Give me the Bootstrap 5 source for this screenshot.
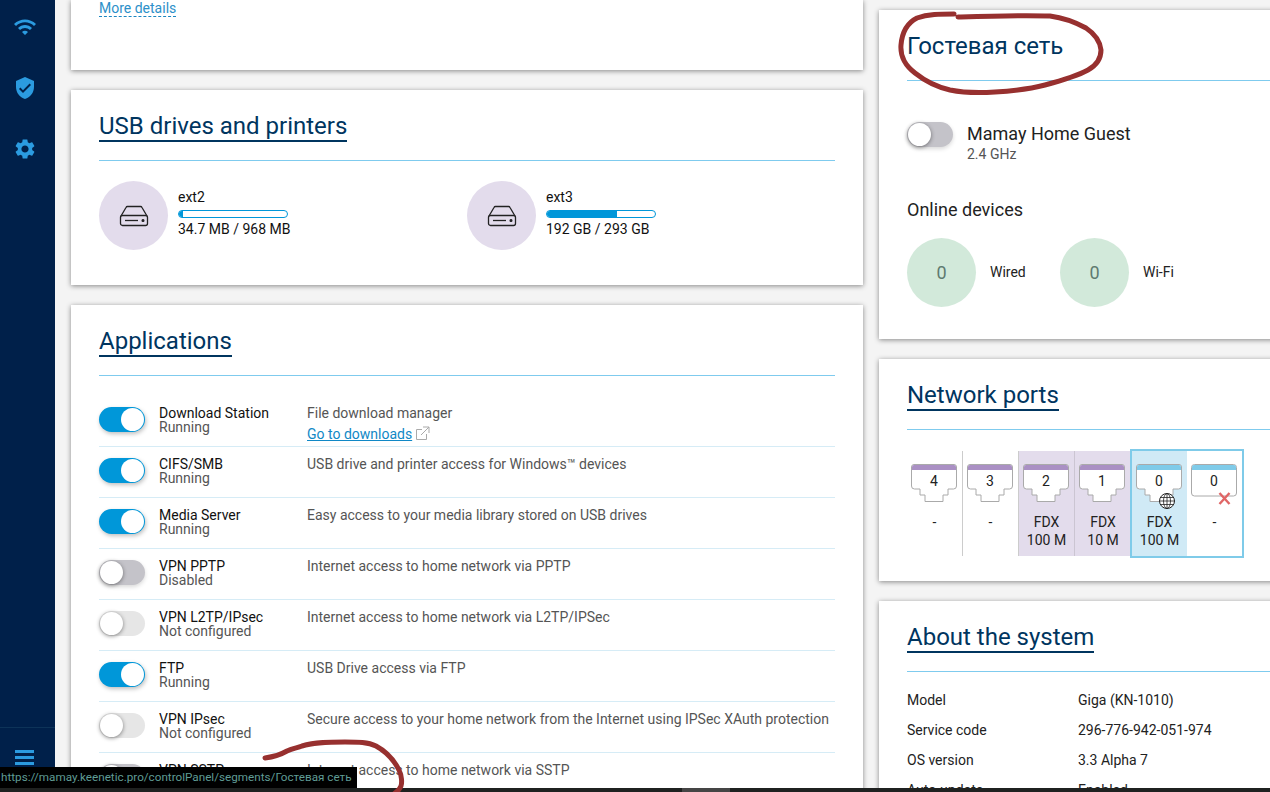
<!DOCTYPE html>
<html lang="en">
<head>
<meta charset="utf-8">
<title>Keenetic</title>
<link rel="stylesheet" href="https://cdn.jsdelivr.net/npm/bootstrap@5.3.0/dist/css/bootstrap.min.css">
<style>
html,body{height:792px;overflow:hidden}
body{background:#f4f4f4;font-family:Roboto,"Noto Sans",sans-serif;font-size:14px;color:#111;position:relative}
.side{width:55px;height:792px;background:#00204a;flex:none}
.side-top{padding-top:15px;gap:37px;padding-right:5px}
.side-ic{width:24px;height:24px;fill:#2b9be0;display:block}
.side-foot{border-top:1px solid #0d3358;height:65px;padding-top:22px;padding-right:6px}
.burger{width:19px;height:15px;background:repeating-linear-gradient(#2b9be0 0 3px,transparent 3px 6px)}
.wrap{padding-left:16px;gap:16px}
.lcol{width:792px;flex:none;gap:20px}
.rcol{width:420px;flex:none;gap:20px;padding-top:10px}
.pane{background:#fff;box-shadow:0 1px 5px rgba(0,0,0,.45);padding:0 28px;border-radius:0}
.pane-first{height:70px}
.more{color:#2c90c9;text-decoration:none;border-bottom:1px dashed #1b86c2;line-height:16px;display:block;width:fit-content;padding-top:0}
.hdr{padding-top:22px;height:71px;border-bottom:1px solid #7fcbee}
.hdr-t{display:inline-block;font-size:24px;line-height:28px;font-weight:400;color:#00355f;margin:0;padding-bottom:0;border-bottom:2px solid #00355f}
.hdr-plain{border-bottom-color:transparent}
.pane-usb{height:195px}
.disc{width:69px;height:69px;border-radius:50%;background:#e3dcec;flex:none}
.disc-green{background:#d2e9da;color:#5f7a70;font-size:18px}
.drive{width:368px;padding-top:20px}
.info{padding-left:10px;padding-top:8px;line-height:16px}
.bar-o{width:110px;height:8px;border:1px solid #0097d9;border-radius:4px;margin:5px 0 3px;overflow:hidden;background:#fff}
.bar-i{height:100%;background:#0097d9}
.pane-app{height:560px}
.applist{padding-top:20px}
.approw{height:51px;border-bottom:1px solid #d6ecf6;padding-top:10px;line-height:14px}
.sw{width:46px;height:25px;border-radius:13px;position:relative;flex:none;margin-top:1px;background:#c4c3c9}
.sw::after{content:"";position:absolute;top:1px;left:1px;width:23px;height:23px;border-radius:50%;background:#fff;box-shadow:0 1px 4px rgba(0,0,0,.45)}
.sw-on{background:#0097d9;box-shadow:1px 2px 4px rgba(0,0,0,.25)}
.sw-on::after{left:22px;box-shadow:none}
.sw-na{background:#e6e6e6}
.sw-off{box-shadow:0 2px 4px rgba(0,0,0,.15)}
.nm{width:148px;margin-left:14px;flex:none}
.stat{color:#555}
.dsc{color:#555;white-space:nowrap}
.golink{color:#1088c6;text-decoration:underline;display:inline-block;margin-top:7px}
.ext{width:15px;height:15px;vertical-align:-2px;margin-left:3px}
.pane-guest{height:329px}
.gname{font-size:18px;line-height:22px;margin:2px 0 0 14px;color:#222}
.gsub{font-size:14px;line-height:18px;color:#555;margin-top:0}
.grow{padding-top:40px}
.osub{font-size:18px;line-height:22px;margin-top:36px;margin-bottom:17px;color:#222}
.dev{width:153px}
.dev-l{margin-left:14px;color:#222}
.pane-ports{height:222px}
.ports{margin-top:21px;height:105px;line-height:18px}
.pcol{width:56px;text-align:center;flex:none;padding-top:13px;color:#222}
.pcol-b{border-right:1px solid #ccc}
.pcol-p{background:#e3dcec;border-right:1px solid #cbc5d2}
.pcol-last{border-right:0}
.pcol-w{width:55px;background:#d0eaf6}
.pcol-x{width:55px}
.pbox{border:2px solid #7fcbe9;margin:-2px 0 -2px -1px;height:109px}
.pic{position:relative;width:46px;height:38px;margin:0 0 11px 4px;text-align:center;display:block}
.pic svg{position:absolute;left:0;top:0;overflow:visible}
.pnum{position:absolute;left:0;right:0;top:8px;line-height:18px;color:#222}
.pane-about{height:300px}
.kv{padding-top:19px}
.kvr{height:30px;line-height:18px;color:#222}
.kvk{width:171px}
.statusbar{position:absolute;left:0;top:767px;width:357px;height:21px;background:#000;color:#5f9c95;font-size:11.7px;line-height:21px;padding-left:1px;white-space:nowrap;overflow:hidden;font-family:Roboto,sans-serif;z-index:5}
.strip{position:absolute;left:0;right:0;top:788px;height:4px;background:#1f2120;z-index:5}
.strip i{position:absolute;left:682px;width:48px;top:0;bottom:0;background:#454545}
.scrib{position:absolute;left:0;top:0;pointer-events:none;z-index:4}
.scrib path{fill:none;stroke:#97302f;stroke-width:5;stroke-linecap:round;stroke-linejoin:round}
.scrib-top{z-index:6}
</style>
</head>
<body>
<svg width="0" height="0" class="position-absolute">
  <defs>
    <path id="jack" d="M.5 3Q.5.500 3 .500h40q2.500 0 2.500 2.500v19q0 3-3 3H37v6h-5v6.500H14V31H9v-6H3.500q-3 0-3-3z" fill="#fff" stroke="#aaa"/>
    <g id="drv" fill="none" stroke="#222" stroke-width="1.3"><path d="M2 11 7 2.500c.3-.6.7-1 1.400-1h13.200c.7 0 1.100.4 1.400 1l5 8.500"/><rect x="1.500" y="10.500" width="27" height="10" rx="2"/><path d="M6 15.500h13"/><circle cx="24" cy="15.500" r=".9" fill="#222"/></g>
  </defs>
</svg>
<div class="d-flex">
  <nav class="side d-flex flex-column justify-content-between align-items-center">
    <div class="side-top d-flex flex-column align-items-center">
      <svg class="side-ic" viewBox="0 0 24 24"><path d="M1 9l2 2c4.970-4.970 13.030-4.970 18 0l2-2C16.930 2.930 7.080 2.930 1 9zm8 8l3 3 3-3c-1.650-1.660-4.340-1.660-6 0zm-4-4l2 2c2.760-2.760 7.240-2.760 10 0l2-2C15.140 9.140 8.870 9.140 5 13z"/></svg>
      <svg class="side-ic" viewBox="0 0 24 24"><path d="M12 1L3 5v6c0 5.550 3.840 10.740 9 12 5.160-1.260 9-6.450 9-12V5l-9-4zm-2 16l-4-4 1.410-1.410L10 14.170l6.590-6.590L18 9l-8 8z"/></svg>
      <svg class="side-ic" viewBox="0 0 24 24"><path d="M19.14 12.94c.04-.3.06-.61.06-.94 0-.32-.02-.64-.07-.94l2.03-1.58c.18-.14.23-.41.12-.61l-1.92-3.32c-.12-.22-.37-.29-.59-.22l-2.39.96c-.5-.38-1.03-.7-1.62-.94l-.36-2.54c-.04-.24-.24-.41-.48-.41h-3.84c-.24 0-.43.17-.47.41l-.36 2.54c-.59.24-1.13.57-1.62.94l-2.39-.96c-.22-.08-.47 0-.59.22L2.74 8.87c-.12.21-.08.47.12.61l2.03 1.58c-.05.3-.09.63-.09.94s.02.64.07.94l-2.03 1.58c-.18.14-.23.41-.12.61l1.92 3.32c.12.22.37.29.59.22l2.39-.96c.5.38 1.03.7 1.62.94l.36 2.54c.05.24.24.41.48.41h3.84c.24 0 .44-.17.47-.41l.36-2.54c.59-.24 1.13-.56 1.62-.94l2.39.96c.22.08.47 0 .59-.22l1.92-3.32c.12-.22.07-.47-.12-.61l-2.01-1.58zM12 15.6c-1.98 0-3.6-1.62-3.6-3.6s1.62-3.6 3.6-3.6 3.6 1.62 3.6 3.6-1.62 3.6-3.6 3.6z"/></svg>
    </div>
    <div class="side-foot w-100 d-flex justify-content-center"><div class="burger"></div></div>
  </nav>

  <main class="wrap d-flex">
    <div class="lcol d-flex flex-column">
      <section class="pane pane-first"><a class="more" href="#">More details</a></section>

      <section class="pane pane-usb">
        <div class="hdr"><h2 class="hdr-t">USB drives and printers</h2></div>
        <div class="d-flex">
          <div class="drive d-flex">
            <div class="disc d-flex align-items-center justify-content-center"><svg width="30" height="22" viewBox="0 0 30 22"><use href="#drv"/></svg></div>
            <div class="info"><div>ext2</div><div class="bar-o"><div class="bar-i" style="width:4%"></div></div><div>34.7 MB / 968 MB</div></div>
          </div>
          <div class="drive d-flex">
            <div class="disc d-flex align-items-center justify-content-center"><svg width="30" height="22" viewBox="0 0 30 22"><use href="#drv"/></svg></div>
            <div class="info"><div>ext3</div><div class="bar-o"><div class="bar-i" style="width:65%"></div></div><div>192 GB / 293 GB</div></div>
          </div>
        </div>
      </section>

      <section class="pane pane-app">
        <div class="hdr"><h2 class="hdr-t">Applications</h2></div>
        <div class="applist">
          <div class="approw d-flex"><span class="sw sw-on"></span><div class="nm"><div>Download Station</div><div class="stat">Running</div></div><div class="dsc">File download manager<br><a class="golink" href="#">Go to downloads</a><svg class="ext" viewBox="0 0 15 15" fill="none" stroke="#aaa"><path d="M11.500 8v5.500h-10v-10H7M8 1h6v6M14 1 6 9"/></svg></div></div>
          <div class="approw d-flex"><span class="sw sw-on"></span><div class="nm"><div>CIFS/SMB</div><div class="stat">Running</div></div><div class="dsc">USB drive and printer access for Windows™ devices</div></div>
          <div class="approw d-flex"><span class="sw sw-on"></span><div class="nm"><div>Media Server</div><div class="stat">Running</div></div><div class="dsc">Easy access to your media library stored on USB drives</div></div>
          <div class="approw d-flex"><span class="sw sw-off"></span><div class="nm"><div>VPN PPTP</div><div class="stat">Disabled</div></div><div class="dsc">Internet access to home network via PPTP</div></div>
          <div class="approw d-flex"><span class="sw sw-na"></span><div class="nm"><div>VPN L2TP/IPsec</div><div class="stat">Not configured</div></div><div class="dsc">Internet access to home network via L2TP/IPSec</div></div>
          <div class="approw d-flex"><span class="sw sw-on"></span><div class="nm"><div>FTP</div><div class="stat">Running</div></div><div class="dsc">USB Drive access via FTP</div></div>
          <div class="approw d-flex"><span class="sw sw-na"></span><div class="nm"><div>VPN IPsec</div><div class="stat">Not configured</div></div><div class="dsc">Secure access to your home network from the Internet using IPSec XAuth protection</div></div>
          <div class="approw d-flex"><span class="sw sw-off"></span><div class="nm"><div>VPN SSTP</div><div class="stat">Disabled</div></div><div class="dsc">Internet access to home network via SSTP</div></div>
        </div>
      </section>
    </div>

    <div class="rcol d-flex flex-column">
      <section class="pane pane-guest">
        <div class="hdr"><h2 class="hdr-t hdr-plain">Гостевая сеть</h2></div>
        <div class="grow d-flex"><span class="sw sw-off"></span><div><div class="gname">Mamay Home Guest</div><div class="gname gsub">2.4 GHz</div></div></div>
        <div class="osub">Online devices</div>
        <div class="d-flex">
          <div class="dev d-flex align-items-center"><div class="disc disc-green d-flex align-items-center justify-content-center">0</div><div class="dev-l">Wired</div></div>
          <div class="dev d-flex align-items-center"><div class="disc disc-green d-flex align-items-center justify-content-center">0</div><div class="dev-l">Wi-Fi</div></div>
        </div>
      </section>

      <section class="pane pane-ports">
        <div class="hdr"><h2 class="hdr-t">Network ports</h2></div>
        <div class="ports d-flex">
          <div class="pcol pcol-b"><div class="pic"><svg width="46" height="38" viewBox="0 0 46 38"><use href="#jack"/><path d="M1 6V3q0-2 2-2h40q2 0 2 2v3z" fill="#aa90c4"/></svg><span class="pnum">4</span></div>-</div>
          <div class="pcol pcol-b"><div class="pic"><svg width="46" height="38" viewBox="0 0 46 38"><use href="#jack"/><path d="M1 6V3q0-2 2-2h40q2 0 2 2v3z" fill="#aa90c4"/></svg><span class="pnum">3</span></div>-</div>
          <div class="pcol pcol-p"><div class="pic"><svg width="46" height="38" viewBox="0 0 46 38"><use href="#jack"/><path d="M1 6V3q0-2 2-2h40q2 0 2 2v3z" fill="#aa90c4"/></svg><span class="pnum">2</span></div>FDX<br>100 M</div>
          <div class="pcol pcol-p pcol-last"><div class="pic"><svg width="46" height="38" viewBox="0 0 46 38"><use href="#jack"/><path d="M1 6V3q0-2 2-2h40q2 0 2 2v3z" fill="#aa90c4"/></svg><span class="pnum">1</span></div>FDX<br>10 M</div>
          <div class="pbox d-flex">
            <div class="pcol pcol-w"><div class="pic"><svg width="46" height="38" viewBox="0 0 46 38"><use href="#jack"/><path d="M1 6V3q0-2 2-2h40q2 0 2 2v3z" fill="#7fcbe9"/><circle cx="31" cy="37" r="7.500" fill="#fff" stroke="#222"/><ellipse cx="31" cy="37" rx="3.500" ry="7.500" fill="none" stroke="#222" stroke-width=".8"/><path d="M31 29.500v15M23.500 37h15M24.500 33.500h13M24.500 40.500h13" fill="none" stroke="#222" stroke-width=".8"/></svg><span class="pnum">0</span></div>FDX<br>100 M</div>
            <div class="pcol pcol-x"><div class="pic"><svg width="46" height="38" viewBox="0 0 46 38"><rect x=".5" y=".5" width="45" height="31.500" rx="3" fill="#fff" stroke="#aaa"/><path d="M1 6V3q0-2 2-2h40q2 0 2 2v3z" fill="#7fcbe9"/><path d="M28.500 29l10 11M38.500 29l-10 11" stroke="#e06666" stroke-width="2.400" fill="none"/></svg><span class="pnum">0</span></div>-</div>
          </div>
        </div>
      </section>

      <section class="pane pane-about">
        <div class="hdr"><h2 class="hdr-t">About the system</h2></div>
        <div class="kv">
          <div class="kvr d-flex"><div class="kvk">Model</div><div>Giga (KN-1010)</div></div>
          <div class="kvr d-flex"><div class="kvk">Service code</div><div>296-776-942-051-974</div></div>
          <div class="kvr d-flex"><div class="kvk">OS version</div><div>3.3 Alpha 7</div></div>
          <div class="kvr d-flex"><div class="kvk">Auto-update</div><div>Enabled</div></div>
        </div>
      </section>
    </div>
  </main>
</div>

<svg class="scrib" width="1270" height="792" viewBox="0 0 1270 792"><path d="M954 14C940 14 928 14 917 18C907 23 902 33 901 45C900 58 906 66 915 73C925 81 937 87 950 90C965 93 980 93 995 92C1012 91 1030 89 1045 85C1060 81 1075 77 1088 70C1097 65 1101 58 1101 50C1100 41 1095 34 1086 28C1075 22 1065 18 1050 16C1020 15 990 16 958 17"/></svg>
<div class="statusbar">https://mamay.keenetic.pro/controlPanel/segments/Гостевая сеть</div>
<div class="strip"><i></i></div>
<svg class="scrib scrib-top" width="1270" height="792" viewBox="0 0 1270 792"><path d="M265 758C272 757 280 755 287 751C293 748 297 748 302 746C315 742 330 742 345 742C358 742 368 742 376 746C387 752 394 760 399 770C402 776 402 783 401 786C400 789 398 791 395 793"/></svg>
</body>
</html>
